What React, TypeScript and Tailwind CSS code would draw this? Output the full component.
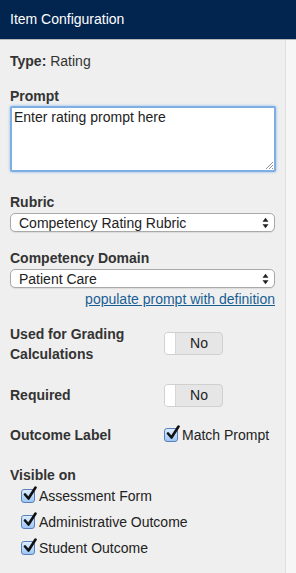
import type { ReactNode } from 'react';

const font = { fontFamily: '"Liberation Sans", Arial, Helvetica, sans-serif' };

function Check() {
  return (
    <span className="relative inline-block w-[14px] h-[14px] rounded-[3px] border border-[#5b7fb8] bg-gradient-to-b from-[#dcedff] to-[#9cc6f5] shrink-0">
      <svg viewBox="0 0 16 16" className="absolute -top-[4px] left-[0px] w-[16px] h-[16px]">
        <path d="M3 8.5 L6.5 12.5 L13.5 1.5" fill="none" stroke="#111" strokeWidth="2.6" strokeLinecap="round" strokeLinejoin="round" />
      </svg>
    </span>
  );
}

function CheckRow({ label }: { label: string }) {
  return (
    <label className="flex items-center gap-[4px] h-[26px] text-[14px] text-[#222]">
      <Check />
      <span>{label}</span>
    </label>
  );
}

function Toggle() {
  return (
    <div className="flex w-[59px] h-[23px] rounded-[4px] border border-[#d0d0d0] overflow-hidden bg-[#e6e6e6]">
      <div className="w-[11px] bg-white border-r border-[#d6d6d6]" />
      <div className="flex-1 flex items-center justify-center text-[14px] text-[#222]">No</div>
    </div>
  );
}

function Select({ value }: { value: string }) {
  return (
    <div className="flex items-center justify-between h-[19px] rounded-[5px] border border-[#a9a9a9] bg-white pl-[8px] pr-[5px] text-[14px] text-[#222] shadow-[0_1px_1px_rgba(0,0,0,0.08)]">
      <span className="leading-[16px]">{value}</span>
      <svg viewBox="0 0 8 14" className="w-[7px] h-[12px]">
        <path d="M4 1 L7.5 5.5 H0.5 Z" fill="#222" />
        <path d="M4 13 L7.5 8.5 H0.5 Z" fill="#222" />
      </svg>
    </div>
  );
}

function Label({ children }: { children: ReactNode }) {
  return <div className="text-[14px] font-bold text-[#333] leading-[16px]">{children}</div>;
}

export default function App() {
  return (
    <div className="w-[296px] h-[573px] bg-[#f6f6f6] overflow-hidden" style={font}>
      <div className="h-[40px] bg-[#022550] flex items-center px-[10px] text-white text-[14px] border-b border-[#b8b8b8]">
        Item Configuration
      </div>
      <div className="w-[286px] h-[533px] bg-[#efefef] border-r border-[#e0e0e0] pl-[10px] pr-[10px] pt-[13px]">
        <div className="text-[14px] text-[#333] leading-[16px]">
          <span className="font-bold">Type:</span> Rating
        </div>

        <div className="mt-[19px]">
          <Label>Prompt</Label>
          <div className="mt-[2px] relative w-[266px] h-[66px] bg-white border-2 border-[#7eaee3] rounded-[2px] shadow-[0_0_3px_#8bb8ee]">
            <div className="px-[2px] pt-[1px] text-[14px] text-[#222] leading-[17px]">Enter rating prompt here</div>
            <svg viewBox="0 0 8 8" className="absolute right-[1px] bottom-[1px] w-[8px] h-[8px]">
              <path d="M1 8 L8 1 M4 8 L8 4 M7 8 L8 7" stroke="#777" strokeWidth="0.8" />
            </svg>
          </div>
        </div>

        <div className="mt-[22px] w-[265px]">
          <Label>Rubric</Label>
          <div className="mt-[3px]">
            <Select value="Competency Rating Rubric" />
          </div>
        </div>

        <div className="mt-[18px] w-[265px]">
          <Label>Competency Domain</Label>
          <div className="mt-[3px]">
            <Select value="Patient Care" />
          </div>
          <div className="text-right mt-[3px] text-[14px] text-[#1a5f94] underline leading-[16px]">
            populate prompt with definition
          </div>
        </div>

        <div className="mt-[17px] flex items-start">
          <div className="w-[154px] text-[14px] font-bold text-[#333] leading-[20px]">
            Used for Grading
            <br />
            Calculations
          </div>
          <div className="mt-[8px]">
            <Toggle />
          </div>
        </div>

        <div className="mt-[20px] flex items-center">
          <div className="w-[154px] text-[14px] font-bold text-[#333]">Required</div>
          <Toggle />
        </div>

        <div className="mt-[15px] flex items-center">
          <div className="w-[154px] text-[14px] font-bold text-[#333]">Outcome Label</div>
          <CheckRow label="Match Prompt" />
        </div>

        <div className="mt-[19px]">
          <Label>Visible on</Label>
          <div className="pl-[11px] flex flex-col">
            <CheckRow label="Assessment Form" />
            <CheckRow label="Administrative Outcome" />
            <CheckRow label="Student Outcome" />
          </div>
        </div>
      </div>
    </div>
  );
}
